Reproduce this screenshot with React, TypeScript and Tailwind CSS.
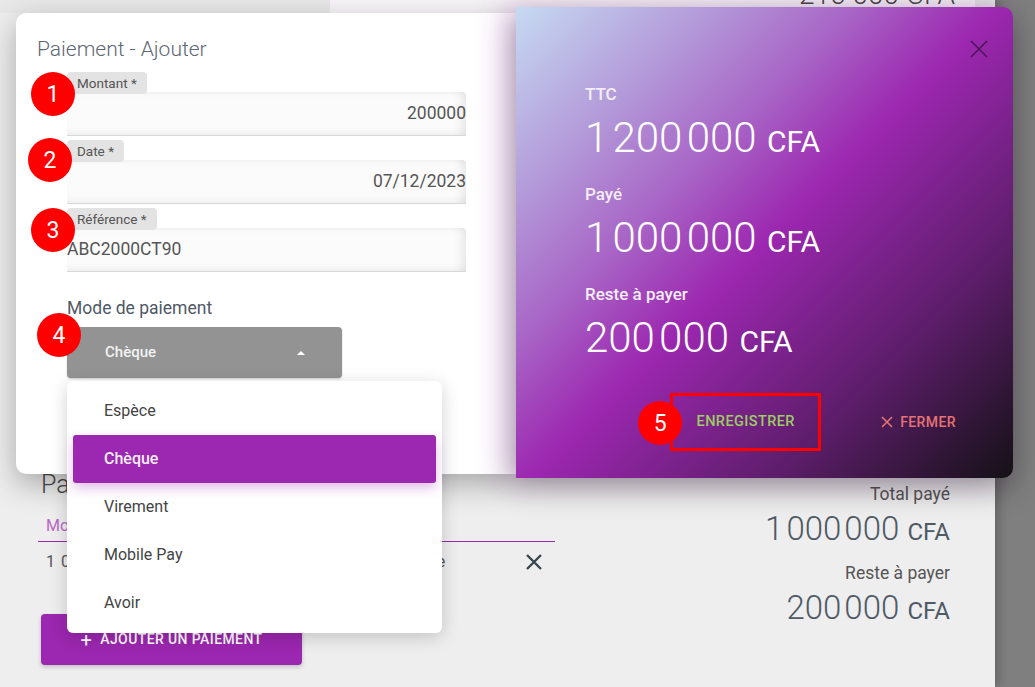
import React from 'react'

function Badge({ n, className }: { n: number; className: string }) {
  return (
    <div className={'absolute z-10 flex h-11 w-11 items-center justify-center rounded-full bg-[#fe0000] text-[23px] leading-none text-white ' + className}>
      {n}
    </div>
  )
}

function Field({ label, value, right, badge, badgeClass }: any) {
  return (
    <div className="relative flex flex-col">
      <Badge n={badge} className={badgeClass} />
      <div className="relative z-[1] h-[22px] w-fit rounded-[4px] bg-[#e3e3e3] px-[10px] text-[13.5px] leading-[22px] text-[#555]">{label}</div>
      <div className={'-mt-[2px] flex h-[44px] items-center rounded-t-[4px] border-b border-[#d8d8d8] bg-[#fbfbfb] shadow-[inset_-10px_0_10px_-6px_rgba(0,0,0,0.08),inset_0_-8px_8px_-6px_rgba(0,0,0,0.06),inset_0_6px_6px_-5px_rgba(0,0,0,0.05)] ' + (right ? 'justify-end' : 'justify-start')}>
        <span className="text-[17.5px] text-[#555]">{value}</span>
      </div>
    </div>
  )
}

const modes = ['Espèce', 'Chèque', 'Virement', 'Mobile Pay', 'Avoir']

const totals = [
  ['TTC', '1 200 000'],
  ['Payé', '1 000 000'],
  ['Reste à payer', '200 000'],
]

export default function App() {
  return (
    <div className="relative h-[687px] w-[1035px] overflow-hidden bg-[#7f7f7f] font-['Roboto',sans-serif]">
      {/* page behind the dialog */}
      <div className="flex h-full w-[995px] flex-col bg-[#eeeeee] shadow-[4px_0_10px_rgba(0,0,0,0.2)]">
        <div className="flex h-[13px] overflow-hidden">
          <div className="w-[330px] bg-[#e8e8e8]" />
          <div className="flex flex-1 justify-end bg-[#f7f5f7] pr-[20px]">
            <span className="-mt-[26px] text-[28px] font-light text-[#444] line-through">216 000 CFA</span>
          </div>
          <div className="w-[20px] bg-[#e6e6e6]" />
        </div>
        <div className="h-[457px]" />
        <div className="flex justify-between pl-[38px] pr-[45px]">
          <div className="w-[517px]">
            <h2 className="pl-[3px] text-[25px] font-light leading-[30px] text-[#4a4a4a]">Paiements</h2>
            <div className="mt-[10px] flex h-[32px] items-center border-b-[1.5px] border-[#9c27b0] pl-[8px] text-[16px] text-[#ba68c8]">
              <span className="w-[190px]">Montant</span>
              <span className="w-[150px]">Date</span>
              <span>Mode</span>
            </div>
            <div className="flex h-[40px] items-center pl-[8px] pr-[12px] text-[16px] tracking-[1px] text-[#555]">
              <span className="w-[190px]">1 000 000 CFA</span>
              <span className="w-[150px]">07/12/2023</span>
              <span className="flex-1">Chèque</span>
              <svg width="18" height="18" viewBox="0 0 18 18">
                <path d="M2 2L16 16M16 2L2 16" stroke="#37474f" strokeWidth="2.4" />
              </svg>
            </div>
            <button className="ml-[3px] mt-[32px] flex h-[51px] w-[261px] items-center justify-center gap-[8px] rounded-[4px] bg-[#9c27b0] text-[14px] font-medium tracking-[0.4px] text-white shadow-[0_2px_4px_rgba(0,0,0,0.2)]">
              <span className="text-[20px] font-normal leading-none">+</span>
              AJOUTER UN PAIEMENT
            </button>
          </div>
          <div className="flex flex-col items-end pt-[12px] text-[#4f5a66]">
            <div className="text-[17.5px] leading-[24px] text-[#555]">Total payé</div>
            <div className="mt-[3px] text-[33px] leading-[40px]">
              <span className="font-light leading-none [word-spacing:-5px]">1 000 000</span> <span className="text-[24px] leading-none">CFA</span>
            </div>
            <div className="mt-[12px] text-[17.5px] leading-[24px] text-[#555]">Reste à payer</div>
            <div className="mt-[3px] text-[33px] leading-[40px]">
              <span className="font-light leading-none [word-spacing:-5px]">200 000</span> <span className="text-[24px] leading-none">CFA</span>
            </div>
          </div>
        </div>
      </div>

      {/* dialog */}
      <div className="absolute left-[16px] top-[7px] flex items-start">
        <div className="relative mt-[6px] h-[461px] w-[500px] rounded-l-[10px] bg-white pl-[21px] pt-[22px] shadow-[0_10px_30px_rgba(0,0,0,0.3)]">
          <h3 className="text-[21px] font-light leading-[28px] text-[#5d6873]">Paiement - Ajouter</h3>
          <div className="ml-[30px] mt-[9px] flex w-[399px] flex-col gap-[4px]">
            <Field label="Montant *" value="200000" right badge={1} badgeClass="-left-[36px] top-0" />
            <Field label="Date *" value="07/12/2023" right badge={2} badgeClass="-left-[39px] -top-[2px]" />
            <Field label="Référence *" value="ABC2000CT90" badge={3} badgeClass="-left-[36px] top-0" />
          </div>
          <div className="ml-[30px] mt-[24px]">
            <p className="text-[17.5px] leading-[24px] text-[#4f5866]">Mode de paiement</p>
            <div className="relative mt-[7px] w-[275px]">
              <Badge n={4} className="-left-[30px] -top-[14px]" />
              <button className="flex h-[51px] w-full items-center justify-between rounded-[4px] bg-[#939393] pl-[38px] pr-[37px] text-[15px] font-medium text-[#f2f2f2] shadow-[0_1px_2px_rgba(0,0,0,0.2)]">
                Chèque
                <span className="h-0 w-0 border-x-[4px] border-b-[4px] border-x-transparent border-b-white" />
              </button>
              <div className="absolute left-0 top-[54px] z-20 w-[375px] rounded-[6px] bg-white py-[6px] shadow-[0_4px_18px_rgba(0,0,0,0.18)]">
                {modes.map(m =>
                  m === 'Chèque' ? (
                    <div key={m} className="mx-[6px] flex h-[48px] items-center rounded-[3px] bg-[#9c27b0] pl-[31px] text-[16px] font-medium text-[#f6eef8] shadow-[0_5px_12px_rgba(156,39,176,0.3)]">{m}</div>
                  ) : (
                    <div key={m} className="mx-[6px] flex h-[48px] items-center pl-[31px] text-[16px] text-[#444]">{m}</div>
                  )
                )}
              </div>
            </div>
          </div>
        </div>

        <div className="relative flex h-[471px] w-[497px] flex-col rounded-r-[10px] bg-[linear-gradient(135deg,#c6daf2_0%,#b39ad9_20%,#a865c6_35%,#9c27b0_50%,#5b1d68_76%,#141116_100%)] pt-[33px] shadow-[0_10px_30px_rgba(0,0,0,0.35),-14px_0_30px_rgba(156,39,176,0.22)]">
          <div className="flex h-[18px] justify-end pr-[25px]">
            <svg width="18" height="18" viewBox="0 0 18 18">
              <path d="M1 1L17 17M17 1L1 17" stroke="#4a1658" strokeWidth="1.6" />
            </svg>
          </div>
          <div className="mt-[26px] flex flex-col gap-[22px] pl-[69px] text-white">
            {totals.map(([l, v]) => (
              <div key={l}>
                <div className="text-[17px] font-medium leading-[20px] text-[#f4eef8]">{l}</div>
                <div className="mt-[10px] h-[48px] text-[42px] leading-[48px]">
                  <span className="font-light leading-none [word-spacing:-6px]">{v}</span> <span className="text-[30px] leading-none">CFA</span>
                </div>
              </div>
            ))}
          </div>
          <div className="mt-[31px] flex items-center justify-end gap-[60px] pr-[57px]">
            <div className="relative flex h-[58px] w-[151px] items-center justify-center border-[3px] border-[#fe0000]">
              <Badge n={5} className="-left-[35px] top-[5px]" />
              <span className="text-[14.5px] font-medium tracking-[0.4px] text-[#9ccc65]">ENREGISTRER</span>
            </div>
            <div className="flex items-center gap-[7px] text-[14px] font-medium tracking-[0.4px] text-[#e57373]">
              <svg width="12" height="12" viewBox="0 0 12 12">
                <path d="M1 1L11 11M11 1L1 11" stroke="#e57373" strokeWidth="1.6" />
              </svg>
              FERMER
            </div>
          </div>
        </div>
      </div>
    </div>
  )
}
